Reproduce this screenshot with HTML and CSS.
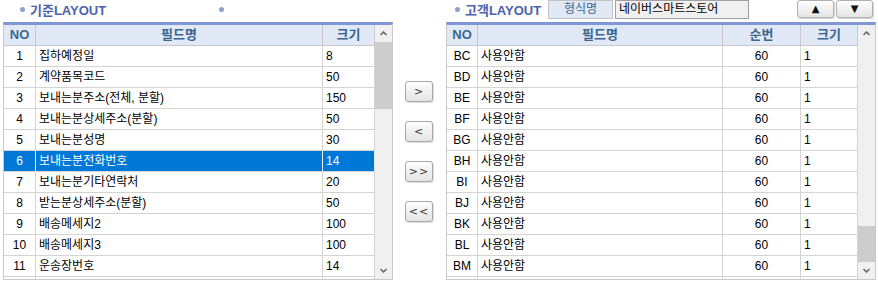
FILE: index.html
```html
<!DOCTYPE html>
<html lang="ko">
<head>
  <meta charset="UTF-8">
  <title>LAYOUT 설정</title>
  <link rel="stylesheet" href="styles.css">
</head>
<body>
  <div class="screen">
    <section class="panel panel-left">
      <div class="panel-head">
        <span class="title title-main">기준LAYOUT</span>
        <span class="title"></span>
      </div>
      <div class="grid">
        <div class="grid-main">
          <div class="row head cols-left">
            <div class="cell">NO</div>
            <div class="cell">필드명</div>
            <div class="cell">크기</div>
          </div>
          <div id="left-body"></div>
        </div>
        <div class="vscroll">
          <div class="arrow"><svg width="7" height="5" viewBox="0 0 7 5"><polyline points="0.5,4 3.5,1 6.5,4" /></svg></div>
          <div class="track"><div class="thumb" style="margin-top:0;height:67px"></div></div>
          <div class="arrow"><svg width="7" height="5" viewBox="0 0 7 5"><polyline points="0.5,1 3.5,4 6.5,1" /></svg></div>
        </div>
      </div>
    </section>

    <div class="movers">
      <button class="mover">&gt;</button>
      <button class="mover">&lt;</button>
      <button class="mover">&gt;&gt;</button>
      <button class="mover">&lt;&lt;</button>
    </div>

    <section class="panel panel-right">
      <div class="panel-head">
        <span class="title title-cust">고객LAYOUT</span>
        <span class="label">형식명</span>
        <span class="field">네이버스마트스토어</span>
        <div class="order">
          <button class="order-btn">&#9650;</button>
          <button class="order-btn">&#9660;</button>
        </div>
      </div>
      <div class="grid">
        <div class="grid-main">
          <div class="row head cols-right">
            <div class="cell">NO</div>
            <div class="cell">필드명</div>
            <div class="cell">순번</div>
            <div class="cell">크기</div>
          </div>
          <div id="right-body"></div>
        </div>
        <div class="vscroll">
          <div class="arrow"><svg width="7" height="5" viewBox="0 0 7 5"><polyline points="0.5,4 3.5,1 6.5,4" /></svg></div>
          <div class="track"><div class="thumb" style="margin-top:184px;height:36px"></div></div>
          <div class="arrow"><svg width="7" height="5" viewBox="0 0 7 5"><polyline points="0.5,1 3.5,4 6.5,1" /></svg></div>
        </div>
      </div>
    </section>
  </div>

  <script>
    const baseFields = [
      ["1", "집하예정일", "8"],
      ["2", "계약품목코드", "50"],
      ["3", "보내는분주소(전체, 분할)", "150"],
      ["4", "보내는분상세주소(분할)", "50"],
      ["5", "보내는분성명", "30"],
      ["6", "보내는분전화번호", "14"],
      ["7", "보내는분기타연락처", "20"],
      ["8", "받는분상세주소(분할)", "50"],
      ["9", "배송메세지2", "100"],
      ["10", "배송메세지3", "100"],
      ["11", "운송장번호", "14"],
      ["", "", ""]
    ];
    const custCodes = ["BC", "BD", "BE", "BF", "BG", "BH", "BI", "BJ", "BK", "BL", "BM", ""];

    function fillLeft() {
      const body = document.getElementById("left-body");
      baseFields.forEach((f) => {
        const row = document.createElement("div");
        row.className = "row cols-left" + (f[0] === "6" ? " selected" : "");
        row.innerHTML = `
          <div class="cell center">${f[0]}</div>
          <div class="cell">${f[1]}</div>
          <div class="cell">${f[2]}</div>
        `;
        body.appendChild(row);
      });
    }

    function fillRight() {
      const body = document.getElementById("right-body");
      custCodes.forEach((code) => {
        const row = document.createElement("div");
        row.className = "row cols-right";
        row.innerHTML = `
          <div class="cell center">${code}</div>
          <div class="cell">${code ? "사용안함" : ""}</div>
          <div class="cell center">${code ? "60" : ""}</div>
          <div class="cell">${code ? "1" : ""}</div>
        `;
        body.appendChild(row);
      });
    }

    fillLeft();
    fillRight();
  </script>
</body>
</html>
```

FILE: styles.css
```css
body {
  margin: 0;
  font-family: "Liberation Sans", "Noto Sans CJK KR", sans-serif;
  font-size: 12px;
  color: #000;
  background: #fff;
}
.screen {
  display: flex;
  padding-left: 3px;
}
.panel-left {
  width: 390px;
}
.panel-right {
  width: 430px;
  margin-left: 13px;
}
.panel-head {
  height: 22px;
  display: flex;
  align-items: flex-start;
}
.panel-left .panel-head {
  padding-left: 17px;
}
.panel-right .panel-head {
  padding-left: 9px;
}
.title {
  display: flex;
  align-items: center;
  gap: 5px;
  height: 18px;
  font-weight: bold;
  font-size: 13px;
  color: #4d62ad;
  flex-shrink: 0;
}
.title::before {
  content: "";
  width: 5px;
  height: 5px;
  border-radius: 50%;
  background: #8fa0cf;
}
.title-main {
  width: 199px;
}
.title-cust {
  width: 88px;
}
.label {
  box-sizing: border-box;
  width: 65px;
  height: 19px;
  margin-left: 5px;
  border: 1px solid #c3c3c3;
  background: #e1e9f6;
  color: #3a6690;
  text-align: center;
  line-height: 17px;
}
.field {
  box-sizing: border-box;
  width: 134px;
  height: 19px;
  margin-left: 2px;
  padding-left: 3px;
  border: 1px solid #a0a0a0;
  background: #f0f0f0;
  line-height: 17px;
}
.order {
  margin-left: auto;
  margin-right: 3px;
  display: flex;
  gap: 2px;
}
.order-btn {
  width: 37px;
  height: 18px;
  padding: 0;
  border: 1px solid #b0b0b0;
  border-radius: 3px;
  background: linear-gradient(#fefefe, #e4e4e4);
  box-shadow: 1px 1px 1px rgba(0, 0, 0, 0.18);
  font-family: "DejaVu Sans", sans-serif;
  font-size: 10px;
  color: #111;
  line-height: 16px;
}
.movers {
  width: 28px;
  margin-left: 12px;
  padding-top: 81px;
  display: flex;
  flex-direction: column;
  gap: 19px;
}
.mover {
  width: 28px;
  height: 21px;
  padding: 0;
  border: 1px solid #a9a9a9;
  border-radius: 3px;
  background: linear-gradient(#fdfdfd, #e4e4e4);
  box-shadow: 1px 1px 1px rgba(0, 0, 0, 0.15);
  font-family: "DejaVu Sans", sans-serif;
  font-size: 11px;
  color: #333;
  letter-spacing: 1px;
}
.grid {
  display: flex;
  height: 258px;
  box-sizing: border-box;
  border-top: 3px solid #8097d5;
  border-left: 1px solid #c9c9c9;
  border-right: 1px solid #c9c9c9;
  border-bottom: 1px solid #c9c9c9;
}
.grid-main {
  flex: 1;
  overflow: hidden;
}
.row {
  display: grid;
  box-sizing: border-box;
  height: 21px;
  border-bottom: 1px solid #d4d4d4;
  line-height: 20px;
}
.cols-left {
  grid-template-columns: 32px 287px 52px;
}
.cols-right {
  grid-template-columns: 31px 245px 78px 57px;
}
.cell {
  border-right: 1px solid #d4d4d4;
  padding-left: 3px;
  white-space: nowrap;
  overflow: hidden;
}
.center {
  padding-left: 0;
  text-align: center;
}
.head {
  background: #e1e9f6;
  border-bottom-color: #c8c8c8;
}
.head .cell {
  padding-left: 0;
  text-align: center;
  font-weight: bold;
  font-size: 13px;
  color: #3a6690;
  border-right-color: #c8c8c8;
}
.selected {
  background: #0078d7;
  color: #fff;
}
.selected .cell {
  border-right-color: #e8eef8;
}
.vscroll {
  width: 17px;
  display: flex;
  flex-direction: column;
  background: #f0f0f0;
}
.arrow {
  height: 17px;
  display: flex;
  align-items: center;
  justify-content: center;
}
.arrow polyline {
  fill: none;
  stroke: #606060;
  stroke-width: 1.5;
}
.track {
  flex: 1;
}
.thumb {
  background: #cdcdcd;
}
```
